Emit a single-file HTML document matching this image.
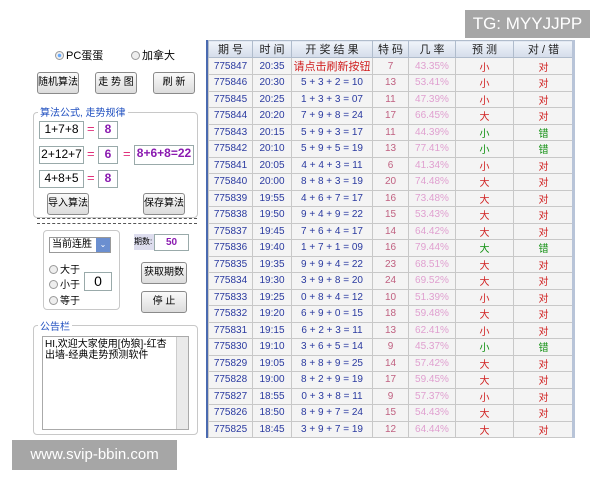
<!DOCTYPE html>
<html><head><meta charset="utf-8"><style>
*{margin:0;padding:0;box-sizing:border-box}
body{width:600px;height:480px;background:#fff;position:relative;overflow:hidden;font-family:"Liberation Sans","Noto Sans CJK SC",sans-serif;font-size:11px;color:#000}
.a{position:absolute;white-space:nowrap}
.btn{position:absolute;border:1px solid #8a8a8a;border-radius:3px;background:linear-gradient(#fafafa,#dcdcdc);font-size:10px;text-align:center;line-height:20px;height:22px;white-space:nowrap;overflow:hidden}
.box{position:absolute;border:1px solid #9aa;background:#fff;text-align:center;font-size:12px;white-space:nowrap}
.pv{color:#8a1ab0;font-weight:bold}
.eq{position:absolute;color:#e0307a;font-size:13px}
table{border-collapse:collapse;position:absolute;left:208px;top:40px;width:365px;font-size:10px;table-layout:fixed}
td{border:1px solid #c8c8c8;height:16.5px;text-align:center;padding:0;background:#f4f4f4;white-space:nowrap;overflow:hidden}
th{height:16px;background:linear-gradient(#f0f4fa,#d4dcea);border:1px solid #b0bccc;font-weight:normal;font-size:11px;color:#222}
.b{color:#2a3aa0}.r{color:#d02020}.g{color:#109010}.p{color:#e0a0d0}.m{color:#c06080}
.rad{display:inline-block;width:9px;height:9px;border:1px solid #999;border-radius:50%;background:#eee;vertical-align:-1px;margin-right:2px}
</style></head><body>
<div class="a" style="left:206px;top:40px;width:2px;height:398px;background:#4a6ab0"></div>
<div class="a" style="left:55px;top:47px;font-size:11px"><span class="rad" style="background:radial-gradient(#6af 30%,#eee 40%)"></span>PC蛋蛋</div>
<div class="a" style="left:131px;top:47px;font-size:11px"><span class="rad"></span>加拿大</div>
<div class="btn" style="left:37px;top:72px;width:42px">随机算法</div>
<div class="btn" style="left:95px;top:72px;width:42px">走 势 图</div>
<div class="btn" style="left:153px;top:72px;width:42px">刷 新</div>
<div class="a" style="left:33px;top:112px;width:165px;height:106px;border:1px solid #c8c8c8;border-radius:4px"></div>
<div class="a" style="left:38px;top:104px;background:#fff;color:#2050c0;font-size:10px;padding:0 2px">算法公式, 走势规律</div>
<div class="box" style="left:39px;top:121px;width:45px;height:18px">1+7+8</div><span class="eq" style="left:87px;top:121px">=</span><div class="box pv" style="left:98px;top:121px;width:20px;height:18px">8</div>
<div class="box" style="left:39px;top:146px;width:45px;height:18px">2+12+7</div><span class="eq" style="left:87px;top:146px">=</span><div class="box pv" style="left:98px;top:146px;width:20px;height:18px">6</div><span class="eq" style="left:123px;top:146px">=</span><div class="box pv" style="left:134px;top:145px;width:60px;height:20px">8+6+8=22</div>
<div class="box" style="left:39px;top:170px;width:45px;height:18px">4+8+5</div><span class="eq" style="left:87px;top:170px">=</span><div class="box pv" style="left:98px;top:170px;width:20px;height:18px">8</div>
<div class="btn" style="left:47px;top:193px;width:42px">导入算法</div>
<div class="btn" style="left:143px;top:193px;width:42px">保存算法</div>
<div class="a" style="left:37px;top:218px;width:160px;height:6px;border-top:1px dashed #555;border-bottom:1px dashed #555"></div>
<div class="a" style="left:43px;top:230px;width:77px;height:80px;border:1px solid #c8c8c8;border-radius:4px"></div>
<div class="a" style="left:49px;top:237px;width:62px;height:16px;border:1px solid #999;font-size:10px;line-height:14px;padding-left:2px">当前连胜<span style="position:absolute;right:0;top:0;width:14px;height:14px;background:#6b8fd0;color:#fff;font-size:8px;text-align:center">⌄</span></div>
<div class="a" style="left:49px;top:261px;font-size:10px"><span class="rad"></span>大于</div>
<div class="a" style="left:49px;top:276px;font-size:10px"><span class="rad"></span>小于</div>
<div class="a" style="left:49px;top:292px;font-size:10px"><span class="rad"></span>等于</div>
<div class="box" style="left:84px;top:272px;width:28px;height:19px;font-size:14px;line-height:17px">0</div>
<div class="a" style="left:134px;top:234px;width:20px;height:16px;background:#dde;font-size:8px;line-height:16px">期数:</div>
<div class="box pv" style="left:154px;top:234px;width:35px;height:17px;font-size:10px;line-height:15px">50</div>
<div class="btn" style="left:141px;top:262px;width:46px">获取期数</div>
<div class="btn" style="left:141px;top:291px;width:46px">停 止</div>
<div class="a" style="left:33px;top:325px;width:165px;height:110px;border:1px solid #c8c8c8;border-radius:4px"></div>
<div class="a" style="left:38px;top:318px;background:#fff;color:#2050c0;font-size:10px;padding:0 2px">公告栏</div>
<div class="a" style="left:42px;top:336px;width:147px;height:94px;border:1px solid #aaa;font-size:10px;line-height:11px;padding:2px;background:#fff;white-space:normal"><div style="width:130px">HI,欢迎大家使用[伪狼]-红杏出墙-经典走势预测软件</div><div style="position:absolute;right:0;top:0;width:12px;height:92px;background:#eaeaea;border-left:1px solid #ccc"></div></div>
<table>
<colgroup><col style="width:44px"><col style="width:39px"><col style="width:81px"><col style="width:36px"><col style="width:47px"><col style="width:58px"><col style="width:60px"></colgroup>
<tr><th>期 号</th><th>时 间</th><th>开 奖 结 果</th><th>特 码</th><th>几 率</th><th>预 测</th><th>对 / 错</th></tr>
<tr><td class="b">775847</td><td class="b">20:35</td><td class="r" style="font-size:11px">请点击刷新按钮</td><td class="m">7</td><td class="p">43.35%</td><td class="r">小</td><td class="r">对</td></tr>
<tr><td class="b">775846</td><td class="b">20:30</td><td class="b">5 + 3 + 2 = 10</td><td class="m">13</td><td class="p">53.41%</td><td class="r">小</td><td class="r">对</td></tr>
<tr><td class="b">775845</td><td class="b">20:25</td><td class="b">1 + 3 + 3 = 07</td><td class="m">11</td><td class="p">47.39%</td><td class="r">小</td><td class="r">对</td></tr>
<tr><td class="b">775844</td><td class="b">20:20</td><td class="b">7 + 9 + 8 = 24</td><td class="m">17</td><td class="p">66.45%</td><td class="r">大</td><td class="r">对</td></tr>
<tr><td class="b">775843</td><td class="b">20:15</td><td class="b">5 + 9 + 3 = 17</td><td class="m">11</td><td class="p">44.39%</td><td class="g">小</td><td class="g">错</td></tr>
<tr><td class="b">775842</td><td class="b">20:10</td><td class="b">5 + 9 + 5 = 19</td><td class="m">13</td><td class="p">77.41%</td><td class="g">小</td><td class="g">错</td></tr>
<tr><td class="b">775841</td><td class="b">20:05</td><td class="b">4 + 4 + 3 = 11</td><td class="m">6</td><td class="p">41.34%</td><td class="r">小</td><td class="r">对</td></tr>
<tr><td class="b">775840</td><td class="b">20:00</td><td class="b">8 + 8 + 3 = 19</td><td class="m">20</td><td class="p">74.48%</td><td class="r">大</td><td class="r">对</td></tr>
<tr><td class="b">775839</td><td class="b">19:55</td><td class="b">4 + 6 + 7 = 17</td><td class="m">16</td><td class="p">73.48%</td><td class="r">大</td><td class="r">对</td></tr>
<tr><td class="b">775838</td><td class="b">19:50</td><td class="b">9 + 4 + 9 = 22</td><td class="m">15</td><td class="p">53.43%</td><td class="r">大</td><td class="r">对</td></tr>
<tr><td class="b">775837</td><td class="b">19:45</td><td class="b">7 + 6 + 4 = 17</td><td class="m">14</td><td class="p">64.42%</td><td class="r">大</td><td class="r">对</td></tr>
<tr><td class="b">775836</td><td class="b">19:40</td><td class="b">1 + 7 + 1 = 09</td><td class="m">16</td><td class="p">79.44%</td><td class="g">大</td><td class="g">错</td></tr>
<tr><td class="b">775835</td><td class="b">19:35</td><td class="b">9 + 9 + 4 = 22</td><td class="m">23</td><td class="p">68.51%</td><td class="r">大</td><td class="r">对</td></tr>
<tr><td class="b">775834</td><td class="b">19:30</td><td class="b">3 + 9 + 8 = 20</td><td class="m">24</td><td class="p">69.52%</td><td class="r">大</td><td class="r">对</td></tr>
<tr><td class="b">775833</td><td class="b">19:25</td><td class="b">0 + 8 + 4 = 12</td><td class="m">10</td><td class="p">51.39%</td><td class="r">小</td><td class="r">对</td></tr>
<tr><td class="b">775832</td><td class="b">19:20</td><td class="b">6 + 9 + 0 = 15</td><td class="m">18</td><td class="p">59.48%</td><td class="r">大</td><td class="r">对</td></tr>
<tr><td class="b">775831</td><td class="b">19:15</td><td class="b">6 + 2 + 3 = 11</td><td class="m">13</td><td class="p">62.41%</td><td class="r">小</td><td class="r">对</td></tr>
<tr><td class="b">775830</td><td class="b">19:10</td><td class="b">3 + 6 + 5 = 14</td><td class="m">9</td><td class="p">45.37%</td><td class="g">小</td><td class="g">错</td></tr>
<tr><td class="b">775829</td><td class="b">19:05</td><td class="b">8 + 8 + 9 = 25</td><td class="m">14</td><td class="p">57.42%</td><td class="r">大</td><td class="r">对</td></tr>
<tr><td class="b">775828</td><td class="b">19:00</td><td class="b">8 + 2 + 9 = 19</td><td class="m">17</td><td class="p">59.45%</td><td class="r">大</td><td class="r">对</td></tr>
<tr><td class="b">775827</td><td class="b">18:55</td><td class="b">0 + 3 + 8 = 11</td><td class="m">9</td><td class="p">57.37%</td><td class="r">小</td><td class="r">对</td></tr>
<tr><td class="b">775826</td><td class="b">18:50</td><td class="b">8 + 9 + 7 = 24</td><td class="m">15</td><td class="p">54.43%</td><td class="r">大</td><td class="r">对</td></tr>
<tr><td class="b">775825</td><td class="b">18:45</td><td class="b">3 + 9 + 7 = 19</td><td class="m">12</td><td class="p">64.44%</td><td class="r">大</td><td class="r">对</td></tr>
</table>
<div class="a" style="left:572px;top:40px;width:3px;height:398px;background:#b8c4d8"></div>
<div class="a" style="left:465px;top:10px;width:125px;height:28px;background:#a6a6a6;color:#fff;font-size:17px;line-height:28px;text-align:center">TG: MYYJJPP</div>
<div class="a" style="left:12px;top:440px;width:165px;height:30px;background:#a6a6a6;color:#fff;font-size:15px;line-height:30px;text-align:center">www.svip-bbin.com</div>
</body></html>
